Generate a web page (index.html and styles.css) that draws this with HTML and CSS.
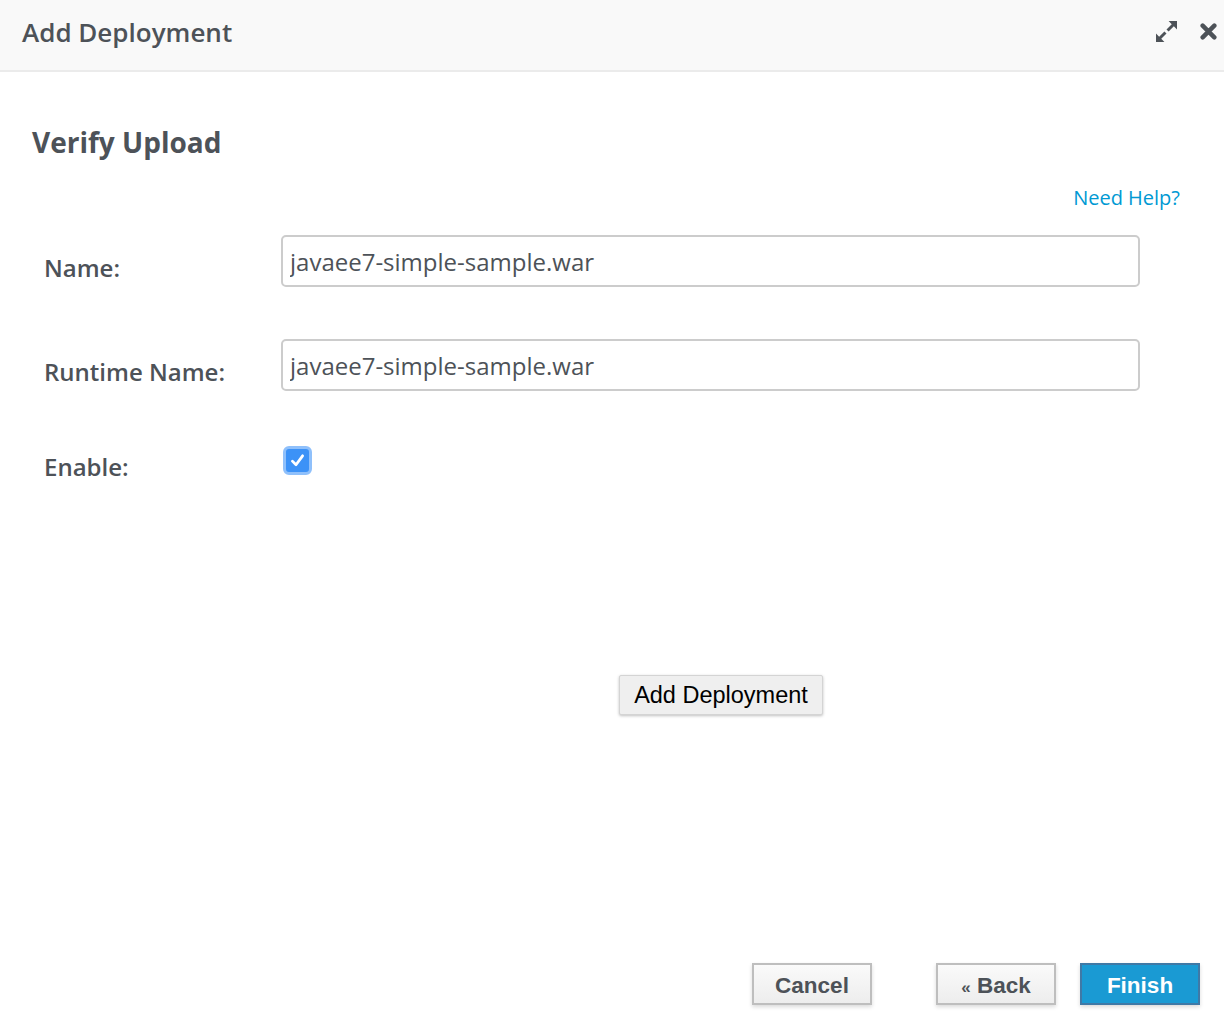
FILE: index.html
```html
<!DOCTYPE html>
<html>
<head>
<meta charset="utf-8">
<link rel="stylesheet" href="styles.css">
</head>
<body>
<div class="dialog">
  <div class="header">
    <h1 class="header-title">Add Deployment</h1>
    <div class="header-tools">
      <svg class="tool-icon expand" width="21" height="21" viewBox="0 0 20 20">
        <path d="M20 0 V8 L17 5 L12 10 L10 8 L15 3 L12 0 Z" fill="#4d5258"/>
        <path d="M0 20 V12 L3 15 L8 10 L10 12 L5 17 L8 20 Z" fill="#4d5258"/>
      </svg>
      <svg class="tool-icon close" width="17" height="17" viewBox="0 0 16 16">
        <path d="M2.5 2.5 L13.5 13.5 M13.5 2.5 L2.5 13.5" stroke="#4d5258" stroke-width="4.2" stroke-linecap="round"/>
      </svg>
    </div>
  </div>

  <div class="body">
    <h2 class="step-title">Verify Upload</h2>
    <div class="help-row"><a class="help-link">Need Help?</a></div>

    <div class="form">
      <div class="form-row">
        <label class="form-label">Name:</label>
        <div class="form-field"><input class="text-input" type="text" value="javaee7-simple-sample.war"></div>
      </div>
      <div class="form-row">
        <label class="form-label">Runtime Name:</label>
        <div class="form-field"><input class="text-input" type="text" value="javaee7-simple-sample.war"></div>
      </div>
      <div class="form-row form-row-check">
        <label class="form-label">Enable:</label>
        <div class="form-field">
          <span class="checkbox">
            <svg width="17" height="17" viewBox="0 0 16 16"><path d="M3.2 8.6 L6.6 12 L12.8 3.6" fill="none" stroke="#fff" stroke-width="2.6" stroke-linecap="round" stroke-linejoin="round"/></svg>
          </span>
        </div>
      </div>
    </div>

    <div class="action-row">
      <button class="plain-button">Add Deployment</button>
    </div>
  </div>

  <div class="footer">
    <button class="wiz-button">Cancel</button>
    <button class="wiz-button back-button"><span class="chev">«</span> Back</button>
    <button class="wiz-button primary">Finish</button>
  </div>
</div>
</body>
</html>
```

FILE: styles.css
```css
html, body {
  margin: 0;
  padding: 0;
  background: #ffffff;
}

body {
  font-family: "Open Sans", "Liberation Sans", sans-serif;
  color: #4d5258;
}

.dialog {
  width: 1224px;
  height: 1024px;
  display: flex;
  flex-direction: column;
}

.header {
  height: 72px;
  box-sizing: border-box;
  border-bottom: 2px solid #ebebeb;
  background: #f9f9f9;
  display: flex;
  align-items: center;
  justify-content: space-between;
  padding: 0 7px 0 22px;
}

.header-title {
  margin: 0;
  font-size: 26px;
  font-weight: 600;
  color: #4d5258;
  line-height: 34px;
  padding-bottom: 6px;
}

.header-tools {
  display: flex;
  align-items: center;
  gap: 23px;
  padding-bottom: 8px;
}

.body {
  flex: 1;
  padding: 0 0 0 32px;
  display: flex;
  flex-direction: column;
}

.step-title {
  margin: 50px 0 0 0;
  font-size: 28px;
  font-weight: 700;
  line-height: 40px;
  color: #4d5258;
}

.help-row {
  display: flex;
  justify-content: flex-end;
  padding-right: 44px;
  margin-top: 22px;
}

.help-link {
  color: #0099d3;
  font-size: 20px;
  line-height: 28px;
}

.form {
  margin-top: 23px;
  padding-left: 12px;
  display: flex;
  flex-direction: column;
  gap: 52px;
}

.form-row {
  display: grid;
  grid-template-columns: 237px 859px;
  align-items: center;
}

.form-label {
  font-size: 24px;
  font-weight: 600;
  color: #4d5258;
  padding-top: 12px;
}

.text-input {
  width: 859px;
  height: 52px;
  box-sizing: border-box;
  border: 2px solid #cccccc;
  border-radius: 5px;
  padding: 0 7px;
  font-family: "Open Sans", sans-serif;
  font-size: 24px;
  color: #4d5258;
  outline: none;
  background: #fff;
}

.form-row-check {
  margin-top: -5px;
}

.checkbox {
  margin-left: 2px;
  width: 23px;
  height: 23px;
  border-radius: 6px;
  background: #3c92f7;
  border: 3px solid #8fc0fb;
  display: flex;
  align-items: center;
  justify-content: center;
}

.action-row {
  margin-top: 192px;
  padding-left: 587px;
}

.plain-button {
  width: 204px;
  height: 40px;
  font-family: "Liberation Sans", Arial, sans-serif;
  font-size: 23.5px;
  color: #000;
  background: #efefef;
  border: 1px solid #d4d4d4;
  border-radius: 2px;
  box-shadow: 0 1px 3px rgba(0, 0, 0, 0.25);
  padding: 0;
}

.footer {
  display: flex;
  justify-content: flex-end;
  padding: 0 24px 19px 0;
}

.wiz-button {
  width: 120px;
  height: 42px;
  box-sizing: border-box;
  font-family: "Liberation Sans", Arial, sans-serif;
  font-weight: 700;
  font-size: 22.5px;
  color: #4d5258;
  background: linear-gradient(#fafafa, #ededed);
  border: 2px solid #bebebe;
  box-shadow: 0 2px 4px rgba(0, 0, 0, 0.15);
  padding: 3px 0 0 0;
}

.back-button {
  margin-left: 64px;
}

.chev {
  font-size: 17px;
}

.primary {
  margin-left: 24px;
  background: #1a9ad3;
  border-color: #3f79a6;
  color: #ffffff;
}
```
